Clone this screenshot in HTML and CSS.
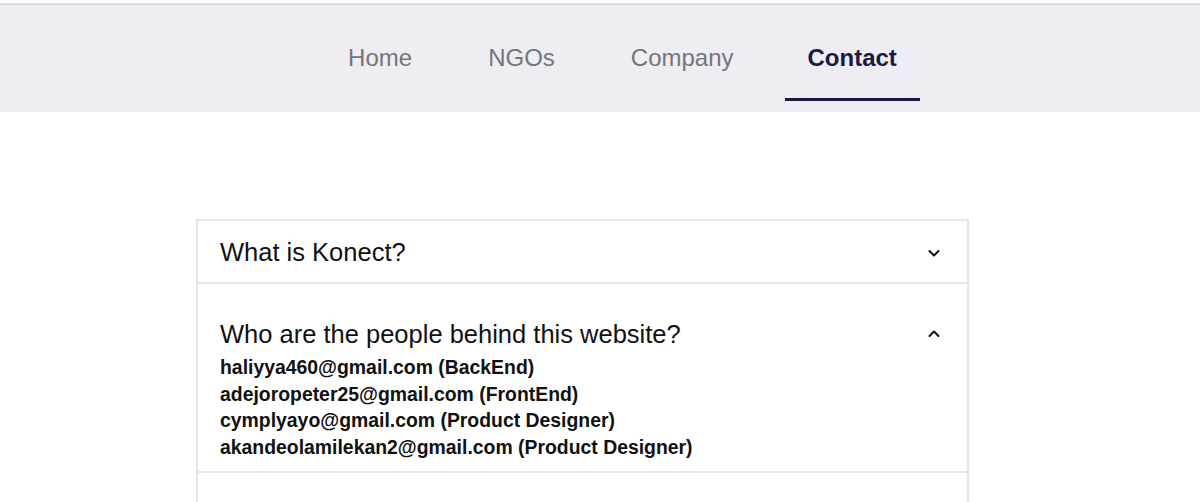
FILE: index.html
```html
<!DOCTYPE html>
<html lang="en">
<head>
  <meta charset="UTF-8" />
  <meta name="viewport" content="width=device-width, initial-scale=1.0"/>
  <title>Konect - Contact</title>
  <link rel="stylesheet" href="styles.css">
</head>
<body>
  <nav class="navbar">
    <a href="#" class="nav-link">Home</a>
    <a href="#" class="nav-link">NGOs</a>
    <a href="#" class="nav-link">Company</a>
    <a href="#" class="nav-link active">Contact</a>
  </nav>

  <div class="faq">
    <!-- Question 1 -->
    <div class="faq-item">
      <div class="faq-question">
        <span>What is Konect?</span>
        <svg class="chevron" width="16" height="16" viewBox="0 0 16 16"><path d="M3.5 6l4.5 4.5 4.5-4.5" fill="none" stroke="#111" stroke-width="2" stroke-linecap="round" stroke-linejoin="round"/></svg>
      </div>
    </div>

    <!-- Question 2 -->
    <div class="faq-item open">
      <div class="faq-question">
        <span>Who are the people behind this website?</span>
        <svg class="chevron" width="16" height="16" viewBox="0 0 16 16"><path d="M3.5 10l4.5-4.5 4.5 4.5" fill="none" stroke="#111" stroke-width="2" stroke-linecap="round" stroke-linejoin="round"/></svg>
      </div>
      <ul class="faq-answer">
        <li>haliyya460@gmail.com (BackEnd)</li>
        <li>adejoropeter25@gmail.com (FrontEnd)</li>
        <li>cymplyayo@gmail.com (Product Designer)</li>
        <li>akandeolamilekan2@gmail.com (Product Designer)</li>
      </ul>
    </div>

    <div class="faq-item">
      <div class="faq-question"><span>&nbsp;</span></div>
    </div>
  </div>
</body>
</html>
```

FILE: styles.css
```css
body {
  font-family: "Liberation Sans", Arial, sans-serif;
  background: #fff;
  color: #111;
  margin: 0;
  padding: 0;
}
.navbar {
  background: #ededf3;
  margin-top: 3px;
  border-top: 2px solid #dcdce2;
  height: 109px;
  display: flex;
  justify-content: center;
  gap: 32px;
  box-sizing: border-box;
  padding-left: 46px;
  padding-bottom: 11px;
}
.nav-link {
  color: #757579;
  text-decoration: none;
  font-size: 24px;
  padding: 12px 22px 0;
  display: flex;
  align-items: center;
  box-sizing: border-box;
  border-bottom: 3px solid transparent;
}
.nav-link.active {
  color: #1c1a40;
  font-weight: bold;
  border-bottom-color: #1c1a40;
  margin-left: -3px;
  padding: 12px 23px 0;
}
.faq {
  width: 769px;
  margin: 107px 0 0 196px;
  border: 2px solid #e6e6ea;
  border-bottom: none;
}
.faq-item {
  border-bottom: 2px solid #e6e6ea;
}
.faq-question {
  display: flex;
  justify-content: space-between;
  align-items: center;
  font-size: 25.5px;
  padding: 2px 25px 0 22px;
  height: 61px;
  box-sizing: border-box;
}
.faq-item.open .faq-question {
  height: auto;
  padding-top: 36px;
  padding-bottom: 0;
}
.faq-item.open .chevron {
  margin-top: -2px;
}
.faq-answer {
  list-style: none;
  margin: 0;
  padding: 5px 22px 10px;
  font-size: 19.4px;
  font-weight: bold;
}
.faq-answer li {
  line-height: 26.7px;
}
```
